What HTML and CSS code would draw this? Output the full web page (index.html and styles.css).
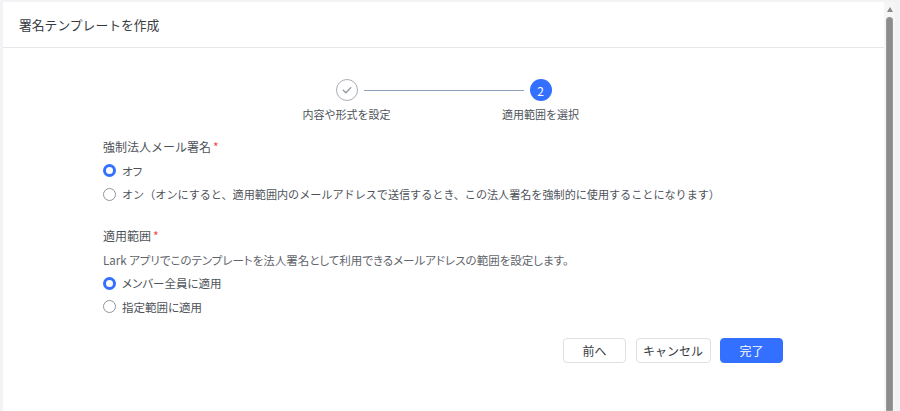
FILE: index.html
```html
<!DOCTYPE html>
<html lang="ja">
<head>
<meta charset="utf-8">
<title>署名テンプレートを作成</title>
<link rel="stylesheet" href="styles.css">
</head>
<body>
<div class="frame">
  <div class="modal">
    <div class="modal-header">署名テンプレートを作成</div>
    <div class="modal-body">
      <div class="stepper">
        <div class="step">
          <div class="circle done">
            <svg width="12" height="12" viewBox="0 0 12 12"><path d="M2.2 6.3 L4.9 8.8 L9.8 3.6" fill="none" stroke="#8f959e" stroke-width="1.3" stroke-linecap="round" stroke-linejoin="round"/></svg>
          </div>
          <div class="step-label">内容や形式を設定</div>
        </div>
        <div class="connector"></div>
        <div class="step">
          <div class="circle active">2</div>
          <div class="step-label">適用範囲を選択</div>
        </div>
      </div>

      <div class="form">
        <div class="group">
          <div class="label">強制法人メール署名<span class="req">*</span></div>
          <div class="radio-row"><span class="radio checked"></span><span>オフ</span></div>
          <div class="radio-row"><span class="radio"></span><span class="long">オン（オンにすると、適用範囲内のメールアドレスで送信するとき、この法人署名を強制的に使用することになります）</span></div>
        </div>
        <div class="group">
          <div class="label">適用範囲<span class="req">*</span></div>
          <div class="desc">Lark アプリでこのテンプレートを法人署名として利用できるメールアドレスの範囲を設定します。</div>
          <div class="radio-row"><span class="radio checked"></span><span>メンバー全員に適用</span></div>
          <div class="radio-row"><span class="radio"></span><span>指定範囲に適用</span></div>
        </div>
        <div class="actions">
          <button class="btn">前へ</button>
          <button class="btn wide">キャンセル</button>
          <button class="btn primary">完了</button>
        </div>
      </div>
    </div>
  </div>
  <div class="scrollbar">
    <div class="arrow"></div>
    <div class="thumb"></div>
  </div>
</div>
</body>
</html>
```

FILE: styles.css
```css
* { box-sizing: border-box; }
html, body {
  margin: 0;
  padding: 0;
  width: 900px;
  height: 411px;
  overflow: hidden;
  background: #f2f3f5;
  font-family: "Noto Sans CJK JP", "Noto Sans", sans-serif;
  color: #4e5359;
}
.frame {
  display: flex;
  padding: 2px 0 0 3px;
  height: 411px;
}
.modal {
  width: 881px;
  height: 409px;
  background: #fff;
  display: flex;
  flex-direction: column;
}
.modal-header {
  height: 46px;
  border-bottom: 1px solid #e4e6e9;
  padding-left: 16px;
  display: flex;
  align-items: center;
  font-size: 12.8px;
  color: #373c43;
}
.modal-body {
  padding: 31px 101px 0 100px;
}
.stepper {
  display: flex;
  justify-content: center;
  padding-left: 1px;
}
.step {
  width: 22px;
  display: flex;
  flex-direction: column;
  align-items: center;
}
.circle {
  width: 22px;
  height: 22px;
  border-radius: 50%;
  display: flex;
  align-items: center;
  justify-content: center;
  font-size: 12px;
}
.circle.done {
  border: 1px solid #a8adb4;
  background: #fff;
}
.circle.active {
  background: #3370ff;
  color: #fff;
}
.connector {
  width: 160px;
  height: 1px;
  background: #8ea1bd;
  margin: 10.5px 6px 0;
}
.step-label {
  white-space: nowrap;
  font-size: 11px;
  line-height: 18px;
  margin-top: 4px;
  color: #4e5359;
}
.form {
  margin-top: 13px;
  display: flex;
  flex-direction: column;
  gap: 20px;
  font-feature-settings: "palt";
}
.group {
  display: flex;
  flex-direction: column;
  gap: 1.5px;
}
.label, .desc, .radio-row {
  font-size: 11.5px;
  line-height: 22px;
  height: 22px;
  white-space: nowrap;
}
.label { color: #4e5359; font-size: 12px; font-feature-settings: normal; }
.req {
  color: #f54a45;
  margin-left: 2px;
}
.desc { color: #5f646b; }
.radio-row {
  display: flex;
  align-items: center;
  gap: 6px;
  color: #4e5359;
}
.long {
  font-feature-settings: normal;
  font-size: 11.1px;
}
.radio {
  width: 13px;
  height: 13px;
  border-radius: 50%;
  border: 1px solid #8f959e;
  background: #fff;
  flex: none;
}
.radio.checked {
  border: 3.5px solid #3370ff;
}
.actions {
  display: flex;
  justify-content: flex-end;
  gap: 9.5px;
}
.btn {
  height: 25px;
  width: 63px;
  border: 1px solid #dee0e3;
  border-radius: 4px;
  background: #fff;
  font-family: inherit;
  font-size: 12px;
  color: #373c43;
  padding: 0;
  cursor: pointer;
}
.btn.wide { width: 75px; }
.btn.primary {
  background: #3370ff;
  border-color: #3370ff;
  color: #fff;
}
.scrollbar {
  width: 11px;
  height: 409px;
  background: #f6f6f6;
  display: flex;
  flex-direction: column;
  align-items: center;
}
.arrow {
  margin-top: 5px;
  width: 0;
  height: 0;
  border-left: 3.5px solid transparent;
  border-right: 3.5px solid transparent;
  border-bottom: 5px solid #8a8a8a;
}
.thumb {
  margin-top: 5px;
  width: 7px;
  flex: 1;
  background: #8c8c8c;
  border-radius: 3px 3px 0 0;
  border: 1px solid #9a9a9a;
}
```
